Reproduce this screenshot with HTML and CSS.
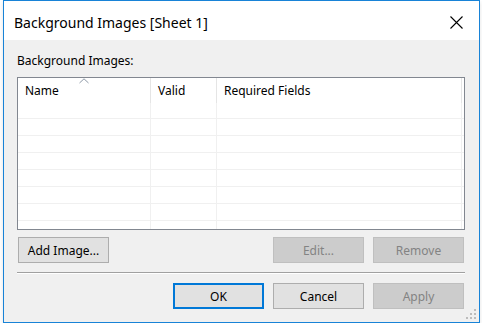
FILE: index.html
```html
<!DOCTYPE html>
<html lang="en">
<head>
    <meta charset="UTF-8">
    <title>Background Images [Sheet 1]</title>
    <link rel="stylesheet" href="styles.css">
</head>
<body>
    <div class="dialog">
        <div class="titlebar">
            <div class="title">Background Images [Sheet 1]</div>
            <div class="close-btn">
                <svg width="13" height="13" viewBox="0 0 13 13">
                    <path d="M0.5 0.5 L12.5 12.5 M12.5 0.5 L0.5 12.5" stroke="#000" stroke-width="1.1" fill="none"/>
                </svg>
            </div>
        </div>

        <div class="content">
            <div class="label">Background Images:</div>

            <div class="listbox">
                <div class="list-header">
                    <div class="hcell col-name">
                        Name
                        <svg class="sort-arrow" width="10" height="6" viewBox="0 0 10 6">
                            <polyline points="0.5,5 5,0.8 9.5,5" stroke="#8d99a6" stroke-width="1" fill="none"/>
                        </svg>
                    </div>
                    <div class="hcell col-valid">Valid</div>
                    <div class="hcell col-fields">Required Fields</div>
                </div>
                <div class="list-rows">
                    <div class="row first"><div class="cell col-name"></div><div class="cell col-valid"></div><div class="cell col-fields"></div></div>
                    <div class="row"><div class="cell col-name"></div><div class="cell col-valid"></div><div class="cell col-fields"></div></div>
                    <div class="row"><div class="cell col-name"></div><div class="cell col-valid"></div><div class="cell col-fields"></div></div>
                    <div class="row"><div class="cell col-name"></div><div class="cell col-valid"></div><div class="cell col-fields"></div></div>
                    <div class="row"><div class="cell col-name"></div><div class="cell col-valid"></div><div class="cell col-fields"></div></div>
                    <div class="row"><div class="cell col-name"></div><div class="cell col-valid"></div><div class="cell col-fields"></div></div>
                    <div class="row"><div class="cell col-name"></div><div class="cell col-valid"></div><div class="cell col-fields"></div></div>
                    <div class="row"><div class="cell col-name"></div><div class="cell col-valid"></div><div class="cell col-fields"></div></div>
                </div>
            </div>

            <div class="list-actions">
                <button class="btn">Add Image...</button>
                <div class="spacer"></div>
                <button class="btn" disabled>Edit...</button>
                <button class="btn" disabled>Remove</button>
            </div>

            <div class="divider"></div>

            <div class="dialog-buttons">
                <button class="btn default">OK</button>
                <button class="btn">Cancel</button>
                <button class="btn" disabled>Apply</button>
            </div>
        </div>

        <svg class="grip" width="12" height="12" viewBox="0 0 12 12">
            <rect x="9" y="0" width="2" height="2" fill="#bcbcbc"/>
            <rect x="5" y="4" width="2" height="2" fill="#bcbcbc"/>
            <rect x="9" y="4" width="2" height="2" fill="#bcbcbc"/>
            <rect x="1" y="8" width="2" height="2" fill="#bcbcbc"/>
            <rect x="5" y="8" width="2" height="2" fill="#bcbcbc"/>
            <rect x="9" y="8" width="2" height="2" fill="#bcbcbc"/>
        </svg>
    </div>
</body>
</html>
```

FILE: styles.css
```css
body {
    margin: 0;
    background-color: #fff;
    font-family: "Noto Sans", "Open Sans", sans-serif;
    font-size: 12px;
    color: #000;
}

.dialog {
    position: relative;
    box-sizing: border-box;
    width: 477px;
    height: 323px;
    margin-left: 3px;
    border: 1px solid #1883d7;
    background-color: #f0f0f0;
    box-shadow: 0 2px 4px rgba(0, 0, 0, 0.12);
    display: flex;
    flex-direction: column;
}

/* barra de titulo */
.titlebar {
    height: 39px;
    background-color: #fff;
    display: flex;
    align-items: center;
    justify-content: space-between;
    padding: 0 16px 0 10px;
}
.title {
    font-size: 14px;
    padding-top: 3px;
}
.close-btn {
    display: flex;
    padding-top: 3px;
}

.content {
    padding: 0 14px 0 13px;
}

.label {
    margin-top: 13px;
    height: 16px;
    line-height: 16px;
}

/* lista */
.listbox {
    margin-top: 8px;
    height: 153px;
    box-sizing: border-box;
    border: 1px solid #828790;
    background-color: #fff;
    overflow: hidden;
}
.list-header,
.row {
    display: flex;
}
.list-header {
    height: 25px;
}
.hcell {
    position: relative;
    box-sizing: border-box;
    height: 25px;
    line-height: 25px;
    padding-left: 7px;
    border-right: 1px solid #e5e5e5;
}
.sort-arrow {
    position: absolute;
    top: 0;
    left: 61px;
}
.col-name {
    width: 133px;
}
.col-valid {
    width: 66px;
}
.col-fields {
    width: 245px;
}
.row {
    height: 17px;
    box-sizing: border-box;
    border-bottom: 1px solid #f0f0f0;
}
.row.first {
    height: 16px;
}
.cell {
    box-sizing: border-box;
    border-right: 1px solid #f0f0f0;
}

/* botoes */
.list-actions,
.dialog-buttons {
    display: flex;
    justify-content: flex-end;
    gap: 9px;
    padding-right: 1px;
}
.list-actions {
    margin-top: 7px;
    padding-left: 1px;
}
.spacer {
    flex-grow: 1;
}
.btn {
    box-sizing: border-box;
    width: 91px;
    height: 26px;
    margin: 0;
    padding: 0;
    border: 1px solid #adadad;
    background-color: #e1e1e1;
    font-family: inherit;
    font-size: 12px;
    color: #000;
}
.btn:disabled {
    border-color: #bfbfbf;
    background-color: #cccccc;
    color: #838383;
}
.btn.default {
    border: 2px solid #0078d7;
}

.divider {
    margin-top: 9px;
    height: 1px;
    background-color: #a0a0a0;
    border-bottom: 1px solid #fff;
}
.dialog-buttons {
    margin-top: 9px;
}

.grip {
    position: absolute;
    right: 2px;
    bottom: 1px;
}
```
